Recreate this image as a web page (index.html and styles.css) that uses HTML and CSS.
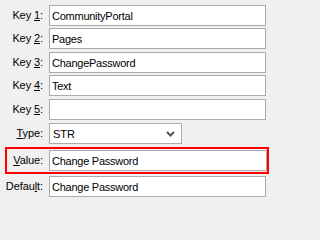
FILE: index.html
```html
<!DOCTYPE html>
<html>
<head>
<meta charset="utf-8">
<link rel="stylesheet" href="styles.css">
</head>
<body>
<div class="form">
  <div class="row r1"><label class="lbl">Key <u>1</u>:</label><input class="field" value="CommunityPortal"></div>
  <div class="row r2"><label class="lbl">Key <u>2</u>:</label><input class="field" value="Pages"></div>
  <div class="row r3"><label class="lbl">Key <u>3</u>:</label><input class="field" value="ChangePassword"></div>
  <div class="row r4"><label class="lbl">Key <u>4</u>:</label><input class="field" value="Text"></div>
  <div class="row r5"><label class="lbl">Key <u>5</u>:</label><input class="field" value=""></div>
  <div class="row r6"><label class="lbl"><u>T</u>ype:</label>
    <div class="select"><span class="sel-text">STR</span>
      <svg class="chev" width="9" height="6" viewBox="0 0 9 6"><path d="M1 1 L4.5 4.5 L8 1" fill="none" stroke="#555" stroke-width="2"/></svg>
    </div>
  </div>
  <div class="highlight">
    <div class="row hl-row"><label class="lbl"><u>V</u>alue:</label><input class="field wide" value="Change Password"></div>
  </div>
  <div class="row r8"><label class="lbl">Defau<u>l</u>t:</label><input class="field" value="Change Password"></div>
</div>
</body>
</html>
```
FILE: styles.css
```css
html, body {
  margin: 0;
  padding: 0;
  background: #f0f0f0;
}
body {
  width: 271px;
  height: 202px;
  overflow: hidden;
  font-family: "Liberation Sans", Arial, sans-serif;
  font-size: 11px;
  color: #000;
}
.form {
  display: flex;
  flex-direction: column;
  padding-top: 5px;
}
.row {
  display: grid;
  grid-template-columns: 43px 217px;
  column-gap: 6px;
  height: 21px;
  align-items: center;
}
.r2 { margin-top: 2px; }
.r3 { margin-top: 3px; }
.r4 { margin-top: 2px; }
.r5 { margin-top: 3px; }
.r6 { margin-top: 3px; }
.r8 { margin-top: 2px; }
.lbl {
  text-align: right;
  white-space: nowrap;
  line-height: 21px;
  letter-spacing: -0.1px;
}
.lbl u {
  text-decoration: underline;
  text-underline-offset: 1px;
}
.field {
  box-sizing: border-box;
  height: 21px;
  width: 100%;
  margin: 0;
  border: 1px solid #ababab;
  background: #fff;
  padding: 0 2px;
  font-family: "Liberation Sans", Arial, sans-serif;
  font-size: 11px;
  letter-spacing: -0.25px;
  color: #000;
  outline: none;
}
.select {
  box-sizing: border-box;
  width: 133px;
  height: 21px;
  border: 1px solid #ababab;
  background: #fff;
  display: flex;
  align-items: center;
  justify-content: space-between;
  padding: 0 6px 0 3px;
}
.chev { display: block; }
.highlight {
  margin-top: 3px;
  margin-left: 5px;
  width: 264px;
  box-sizing: border-box;
  border: 2px solid #ff0000;
  padding: 1px 0;
}
.hl-row {
  grid-template-columns: 36px 218px;
}
```
